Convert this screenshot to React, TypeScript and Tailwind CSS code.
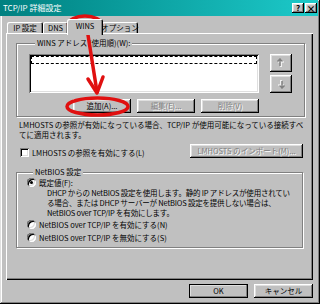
import React from "react"

const raised =
  "bg-[#c0c0c0] shadow-[inset_-1px_-1px_#000,inset_1px_1px_#fff,inset_-2px_-2px_#808080,inset_2px_2px_#dfdfdf]"
const sunken =
  "bg-white shadow-[inset_1px_1px_#808080,inset_-1px_-1px_#fff,inset_2px_2px_#000,inset_-2px_-2px_#dfdfdf]"
const disabledText = "text-[#808080] [text-shadow:1px_1px_#fff]"

function Button({ label, disabled, wide, isDefault }: { label: string; disabled?: boolean; wide?: string; isDefault?: boolean }) {
  return (
    <div
      className={`${raised} ${wide ?? "w-[58px]"} h-[14px] flex items-center justify-center whitespace-nowrap ${
        disabled ? disabledText : ""
      } ${isDefault ? "outline outline-1 outline-black -outline-offset-1" : ""}`}
    >
      {label}
    </div>
  )
}

function Tab({ label, active, w }: { label: string; active?: boolean; w: string }) {
  return (
    <div
      className={`${w} bg-[#c0c0c0] rounded-t-[2px] flex items-center justify-center whitespace-nowrap shadow-[inset_1px_1px_#fff,inset_-1px_0_#000,inset_-2px_0_#808080] ${
        active ? "h-[16px] -mb-[2px] -mx-[1px] relative z-10 pb-[2px]" : "h-[11px]"
      }`}
    >
      {label}
    </div>
  )
}

function Radio({ checked, label }: { checked?: boolean; label: React.ReactNode }) {
  return (
    <div className="flex items-center h-[9px] gap-[3px] whitespace-nowrap">
      <div className={`${sunken} w-[9px] h-[9px] rounded-full flex items-center justify-center`}>
        {checked && <div className="w-[3px] h-[3px] rounded-full bg-black" />}
      </div>
      <span>{label}</span>
    </div>
  )
}

function Arrow({ down }: { down?: boolean }) {
  return (
    <svg width="10" height="10" viewBox="0 0 10 10" className={down ? "rotate-180" : ""}>
      <g transform="translate(1,1)" stroke="#fff" strokeWidth="1.5" fill="none">
        <path d="M4 1 V8 M1.5 3.5 L4 1 L6.5 3.5" />
      </g>
      <g stroke="#808080" strokeWidth="1.5" fill="none">
        <path d="M4 1 V8 M1.5 3.5 L4 1 L6.5 3.5" />
      </g>
    </svg>
  )
}

function Group({ title, className, children }: { title: string; className?: string; children: React.ReactNode }) {
  return (
    <fieldset className={`border border-[#808080] shadow-[inset_1px_1px_#fff,1px_1px_#fff] ${className ?? ""}`}>
      <legend className="ml-[6px] px-[2px] h-[10px] leading-[10px] bg-[#c0c0c0]">{title}</legend>
      {children}
    </fieldset>
  )
}

export default function App() {
  return (
    <div className="relative w-[320px] h-[304px] bg-[#c0c0c0] overflow-hidden text-black text-[7.5px] leading-none font-['Noto_Sans_CJK_JP','Noto_Sans',sans-serif] shadow-[inset_-1px_-1px_#000,inset_1px_1px_#dfdfdf,inset_-2px_-2px_#808080,inset_2px_2px_#fff]">
      {/* title bar */}
      <div className="h-[16px] mr-[2px] flex items-center bg-gradient-to-r from-[#008080] to-[#1ccaca]">
        <span className="pl-[3px] text-white text-[8px]">TCP/IP 詳細設定</span>
        <div className="ml-auto flex gap-[1px] mr-[1px]">
          <div className={`${raised} w-[12px] h-[10px] flex items-center justify-center font-bold text-[8px]`}>?</div>
          <div className={`${raised} w-[12px] h-[10px] flex items-center justify-center font-bold text-[9px]`}>×</div>
        </div>
      </div>

      <div className="pl-[6px] pr-[7px] pt-[3px] flex flex-col">
        {/* tabs */}
        <div className="flex items-end h-[14px] pl-[1px]">
          <Tab label="IP 設定" w="w-[36px]" />
          <Tab label="DNS" w="w-[25px]" />
          <Tab label="WINS" w="w-[36px]" active />
          <Tab label="オプション" w="w-[36px]" />
        </div>

        {/* panel */}
        <div className="h-[247px] px-[10px] pt-[5px] flex flex-col shadow-[inset_1px_1px_#fff,inset_-1px_-1px_#000,inset_-2px_-2px_#808080]">
          <Group title="WINS アドレス (使用順)(W):" className="px-[12px] pb-[3px]">
            <div className="flex mt-[6px]">
              <div className={`${sunken} w-[230px] h-[39px] p-[2px]`}>
                <div className="h-[8px] border border-dashed border-black" />
              </div>
              <div className="ml-[11px] flex flex-col gap-[3px]">
                <div className={`${raised} w-[22px] h-[18px] flex items-center justify-center`}>
                  <Arrow />
                </div>
                <div className={`${raised} w-[22px] h-[18px] flex items-center justify-center`}>
                  <Arrow down />
                </div>
              </div>
            </div>
            <div className="w-[230px] flex justify-end gap-[6px] mt-[6px]">
              <Button label="追加(A)..." />
              <Button label="編集(E)..." disabled />
              <Button label="削除(V)" disabled />
            </div>
          </Group>

          <p className="ml-[3px] mt-[3px] leading-[10px] whitespace-nowrap">
            LMHOSTS の参照が有効になっている場合、TCP/IP が使用可能になっている接続すべ
            <br />
            てに適用されます。
          </p>

          <div className="flex items-center mt-[4px] h-[14px]">
            <div className="ml-[4px] flex items-center gap-[3px] mt-[3px]">
              <div className={`${sunken} w-[9px] h-[9px]`} />
              <span className="whitespace-nowrap">LMHOSTS の参照を有効にする(L)</span>
            </div>
            <div className="ml-auto">
              <Button label="LMHOSTS のインポート(M)..." disabled wide="w-[113px]" />
            </div>
          </div>

          <Group title="NetBIOS 設定" className="mt-[9px] pl-[10px] pt-[1px] pb-[5px]">
            <Radio checked label="既定値(F):" />
            <p className="ml-[20px] mt-[1px] leading-[10px] tracking-[-0.2px] whitespace-nowrap">
              DHCP からの NetBIOS 設定を使用します。静的 IP アドレスが使用されてい
              <br />
              る場合、または DHCP サーバーが NetBIOS 設定を提供しない場合は、
              <br />
              NetBIOS over TCP/IP を有効にします。
            </p>
            <div className="mt-[2px]">
              <Radio label="NetBIOS over TCP/IP を有効にする(N)" />
            </div>
            <div className="mt-[4px]">
              <Radio label="NetBIOS over TCP/IP を無効にする(S)" />
            </div>
          </Group>
        </div>

        <div className="flex justify-end gap-[6px] mt-[4px]">
          <Button label="OK" wide="w-[59px]" isDefault />
          <Button label="キャンセル" wide="w-[59px]" />
        </div>
      </div>

      {/* red annotations */}
      <svg className="absolute inset-0 pointer-events-none" width="320" height="304" viewBox="0 0 320 304">
        <g stroke="#e01010" strokeWidth="3.5" fill="none" strokeLinecap="round" strokeLinejoin="round">
          <ellipse cx="85" cy="24.5" rx="16.5" ry="8.5" />
          <ellipse cx="97.5" cy="106.5" rx="30.5" ry="8.5" />
          <path d="M88 35 L97 92" />
          <path d="M88 79 L97 93 L103 77" />
        </g>
      </svg>
    </div>
  )
}
